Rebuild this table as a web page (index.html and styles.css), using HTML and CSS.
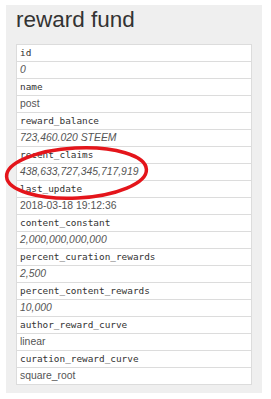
FILE: index.html
```html
<!DOCTYPE html>
<html>
<head>
<meta charset="utf-8">
<link rel="stylesheet" href="styles.css">
</head>
<body>
<div class="panel">
  <h1 class="title">reward fund</h1>
  <table class="fund">
    <tr><td class="key">id</td></tr>
    <tr><td class="val num">0</td></tr>
    <tr><td class="key">name</td></tr>
    <tr><td class="val">post</td></tr>
    <tr><td class="key">reward_balance</td></tr>
    <tr><td class="val num">723,460.020 STEEM</td></tr>
    <tr><td class="key">recent_claims</td></tr>
    <tr><td class="val num">438,633,727,345,717,919</td></tr>
    <tr><td class="key">last_update</td></tr>
    <tr><td class="val">2018-03-18 19:12:36</td></tr>
    <tr><td class="key">content_constant</td></tr>
    <tr><td class="val num">2,000,000,000,000</td></tr>
    <tr><td class="key">percent_curation_rewards</td></tr>
    <tr><td class="val num">2,500</td></tr>
    <tr><td class="key">percent_content_rewards</td></tr>
    <tr><td class="val num">10,000</td></tr>
    <tr><td class="key">author_reward_curve</td></tr>
    <tr><td class="val">linear</td></tr>
    <tr><td class="key">curation_reward_curve</td></tr>
    <tr><td class="val">square_root</td></tr>
  </table>
  <svg class="circle" width="160" height="70" viewBox="0 0 160 70">
    <ellipse cx="76.5" cy="33" rx="70" ry="25" fill="none" stroke="#e4151b" stroke-width="3.5" transform="rotate(-3 76.5 33)"/>
  </svg>
</div>
</body>
</html>
```
FILE: styles.css
```css
html, body {
  margin: 0;
  padding: 0;
  background: #ffffff;
}
.panel {
  position: relative;
  margin: 5px 0 0 6px;
  width: 256px;
  height: 388px;
  box-sizing: border-box;
  padding: 2px 10px 0 10px;
  background: #efefef;
}
.title {
  margin: 0 0 11px 0;
  font-family: "Liberation Sans", Arial, sans-serif;
  font-weight: normal;
  font-size: 22.5px;
  line-height: 26px;
  color: #333333;
}
.fund {
  width: 236px;
  border-collapse: collapse;
  background: #ffffff;
}
.fund td {
  height: 16px;
  padding: 0 3px;
  border: 1px solid #dcdcdc;
  line-height: 16px;
  white-space: nowrap;
}
.key {
  font-family: "DejaVu Sans Mono", monospace;
  font-size: 9.4px;
  color: #333333;
}
.val {
  font-family: "Liberation Sans", Arial, sans-serif;
  font-size: 10.4px;
  color: #555555;
}
.num {
  font-style: italic;
}
.circle {
  position: absolute;
  left: -6px;
  top: 135px;
}
```
